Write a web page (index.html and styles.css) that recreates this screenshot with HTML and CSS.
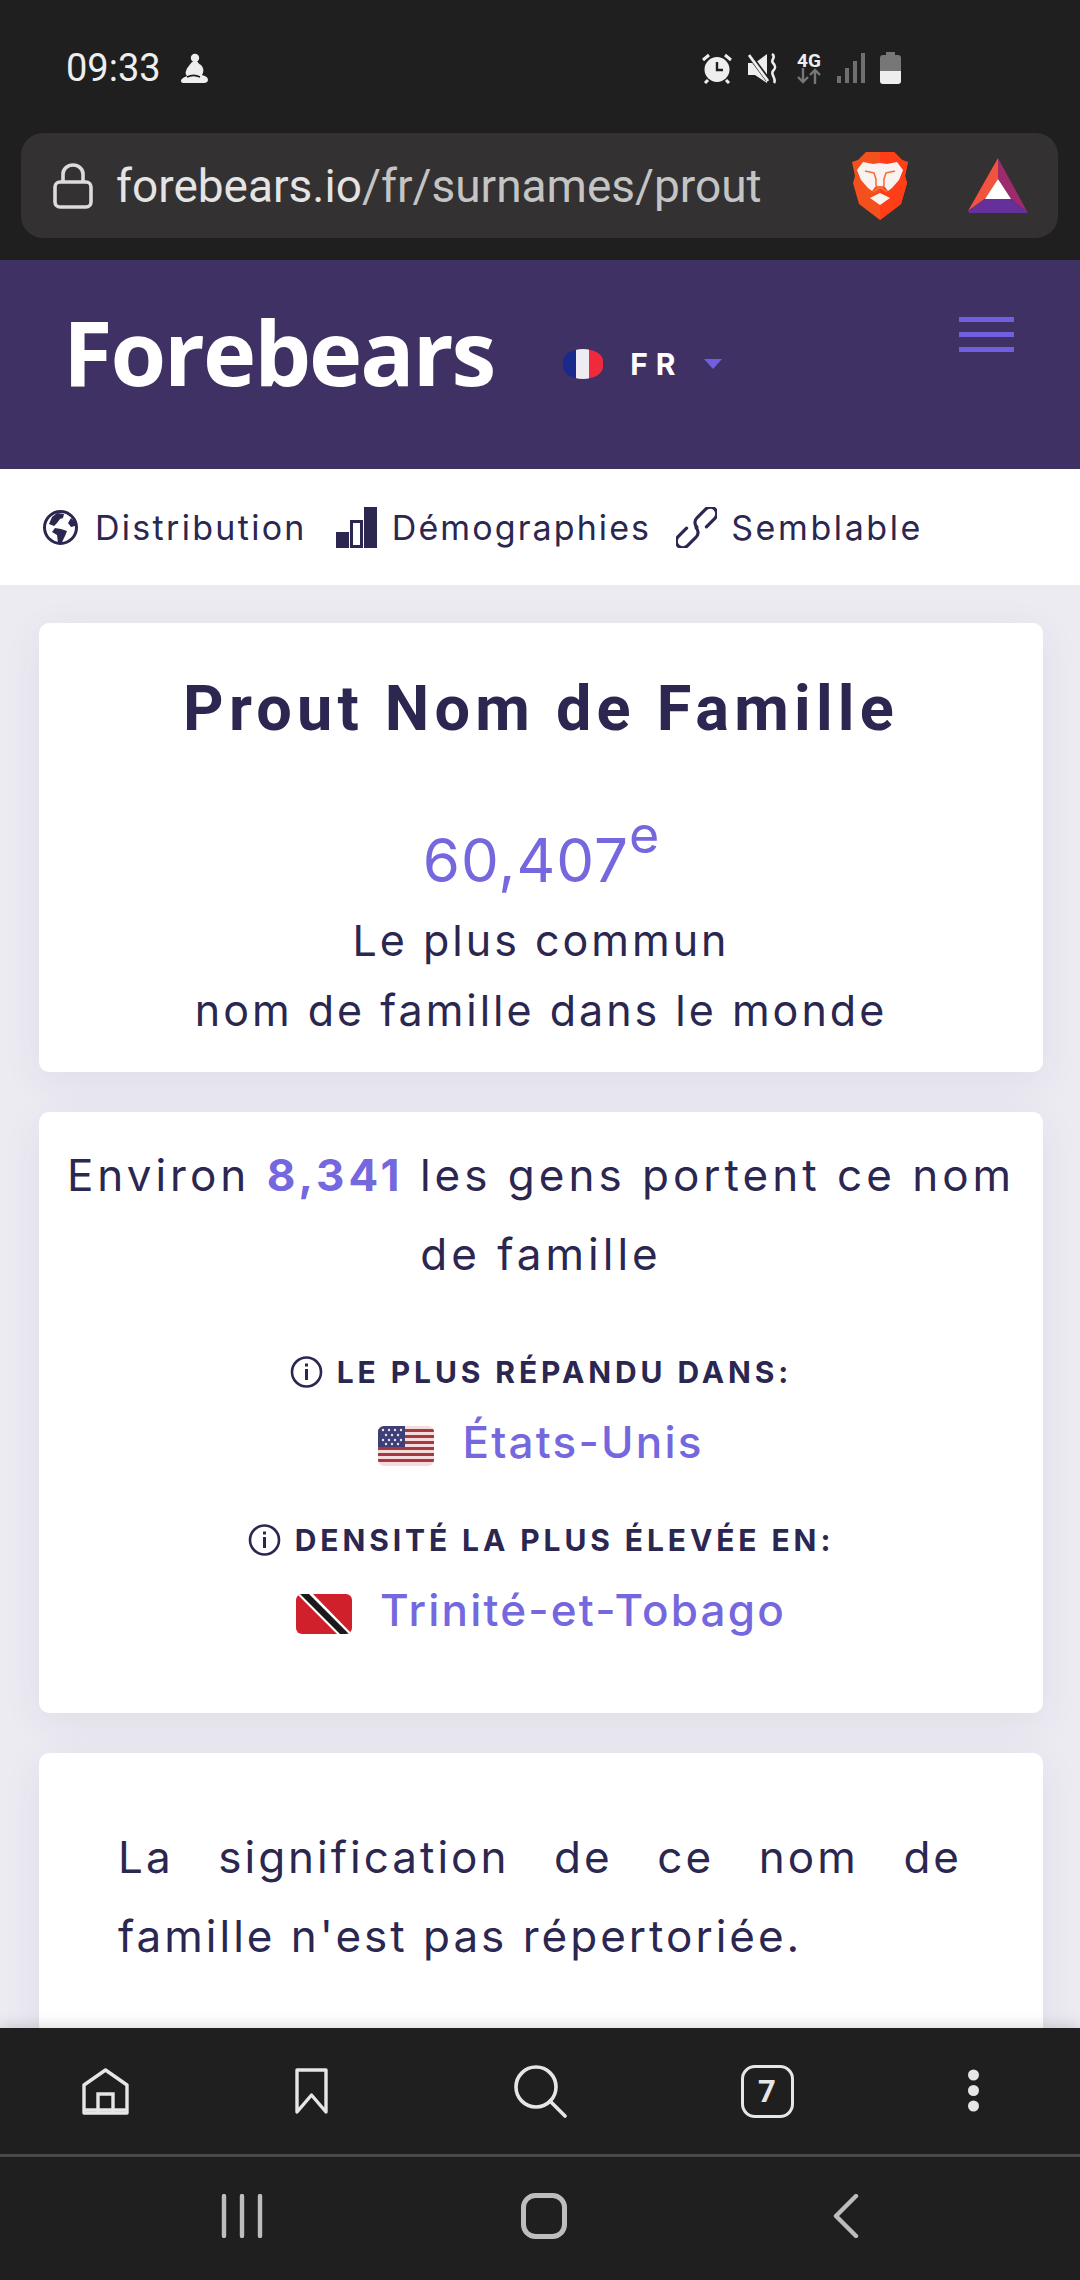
FILE: index.html
```html
<!DOCTYPE html>
<html lang="fr">
<head>
  <meta charset="UTF-8" />
  <title>Prout Nom de Famille – Forebears</title>
  <link rel="stylesheet" href="styles.css">
</head>
<body>
  <div class="browser_top">
    <div class="status">
      <span class="time">09:33</span>
      <svg class="baby" width="28" height="30" viewBox="0 0 28 30"><circle cx="15" cy="5" r="4.200" fill="#eee"/><path d="M12 9c-2 3-5 5-6 9-1 2 0 4 1 5-3 1-6 3-6 5s2 2 4 2h19c2 0 4-1 4-3 0-3-3-4-6-5 2-3 2-7-1-10-2-1-3-2-3-3z" fill="#eee"/><path d="M7 24c4-2 9-2 13 0" stroke="#1f1f1f" stroke-width="1.600" fill="none"/></svg>
      <div class="status_icons">
        <svg width="30" height="31" viewBox="0 0 30 31"><circle cx="15" cy="16.500" r="12.500" fill="#eee"/><path d="M15 9v8h6" stroke="#1f1f1f" stroke-width="2.400" fill="none"/><path d="M1 7l6-5M29 7l-6-5M6 27l-3 3M24 27l3 3" stroke="#eee" stroke-width="3" fill="none"/></svg>
        <svg class="mute" width="30" height="31" viewBox="0 0 30 31"><path d="M0 10h7l12-9v29L7 22H0z" fill="#eee"/><path d="M0 0l20 27" stroke="#1f1f1f" stroke-width="5"/><path d="M1 2l19 26" stroke="#eee" stroke-width="2.800"/><path d="M24 1c5 3-2 6 1 9s3 5 0 8 4 8 1 12" stroke="#eee" stroke-width="2.600" fill="none"/></svg>
        <div class="net">
          <span class="net_label">4G</span>
          <svg width="24" height="16" viewBox="0 0 24 16"><path d="M6 0v14M1 9l5 5 5-5" stroke="#777" stroke-width="2.400" fill="none"/><path d="M18 16V2M13 7l5-5 5 5" stroke="#777" stroke-width="2.400" fill="none"/></svg>
        </div>
        <svg width="29" height="30" viewBox="0 0 29 30"><g fill="#6f6f6f"><rect x="0" y="23" width="4" height="7"/><rect x="8" y="15" width="4" height="15"/><rect x="16" y="8" width="4" height="22"/><rect x="24" y="0" width="4" height="30"/></g></svg>
        <svg class="battery" width="21" height="32" viewBox="0 0 21 32"><path d="M6 0h9v3h3a3 3 0 0 1 3 3v13H0V6a3 3 0 0 1 3-3h3z" fill="#777"/><path d="M0 19h21v10a3 3 0 0 1-3 3H3a3 3 0 0 1-3-3z" fill="#eee"/></svg>
      </div>
    </div>
    <div class="urlbar">
      <svg class="lock" width="40" height="46" viewBox="0 0 40 46"><rect x="2" y="19" width="36" height="25" rx="5" fill="none" stroke="#dcdcdc" stroke-width="3.600"/><path d="M10 19V11a10 9 0 0 1 20 0v8" fill="none" stroke="#dcdcdc" stroke-width="3.600"/></svg>
      <span class="url"><span class="url_host">forebears.io</span>/fr/surnames/prout</span>
      <div class="url_actions">
        <svg width="56" height="68" viewBox="0 0 56 68">
          <path d="M14 0h28l8 8 6 2-3 14 2 7-6 21-21 16-21-16-6-21 2-7-3-14 6-2z" fill="#f4501e"/>
          <path d="M28 0h14l8 8 6 2-3 14 2 7-6 21-21 16z" fill="#ff3d17"/>
          <path d="M11 10l10 2 7-1 7 1 10-2 6 8-4 10-7 8-4 3-3-4-5-1-5 1-3 4-4-3-7-8-4-10z" fill="#f8f3f0"/>
          <path d="M18 46l10-5 10 5-10 7z" fill="#f8f3f0"/>
          <path d="M13 19l9 2 2 6v7l4 2 4-2v-7l2-6 9-2M21 40l7-5 7 5" fill="none" stroke="#f4703e" stroke-width="1.600"/>
        </svg>
        <svg width="60" height="55" viewBox="0 0 60 55">
          <path d="M30 0L0 53l18-13 12-19z" fill="#f2533c"/>
          <path d="M30 0l30 55-18-15-12-19z" fill="#9e2a6e"/>
          <path d="M0 53l1 2h59L42 40H18z" fill="#66309a"/>
          <path d="M30 21l13 20H17z" fill="#fff"/>
        </svg>
      </div>
    </div>
  </div>

  <div class="page">
    <header class="site_header">
      <span class="logo">Forebears</span>
      <div class="lang">
        <span class="lang_flag"></span>
        <span class="lang_code">FR</span>
        <span class="lang_caret"></span>
      </div>
      <div class="burger"><span></span><span></span><span></span></div>
    </header>

    <nav class="tabs">
      <a class="tab tab_first">
        <svg width="35" height="35" viewBox="0 0 35 35"><circle cx="17.500" cy="17.500" r="16" fill="#fff" stroke="#2b2750" stroke-width="3"/><path d="M14 3l-5 4-3 7 5 2 3-3 3-4 3-1 1-4zM12 18l-3 4 5 3 1 8 4-1 3-6 2-5-6-2zM28 8l-3 5 3 4 4-1 1-3z" fill="#2b2750"/></svg>
        Distribution
      </a>
      <a class="tab tab_second">
        <svg width="41" height="41" viewBox="0 0 41 41"><rect x="0" y="25" width="13" height="16" fill="#2b2750"/><rect x="15.500" y="14.500" width="10" height="25" fill="none" stroke="#2b2750" stroke-width="3"/><rect x="28" y="0" width="13" height="41" fill="#2b2750"/></svg>
        Démographies
      </a>
      <a class="tab tab_third">
        <svg width="41" height="41" viewBox="0 0 41 41"><g transform="rotate(45 20.500 20.500)" fill="none" stroke="#2b2750" stroke-width="3.200" stroke-linecap="round"><path d="M27 13V1a6.500 6.500 0 0 0-13 0v12a6.500 6.500 0 0 0 6.500 7"/><path d="M14 28v12a6.500 6.500 0 0 0 13 0V28a6.500 6.500 0 0 0-6.500-7"/></g></svg>
        Semblable
      </a>
    </nav>

    <main class="cards">
      <section class="card card_rank">
        <h1 class="title">Prout Nom de Famille</h1>
        <div class="rank">60,407<sup>e</sup></div>
        <p class="rank_text">Le plus commun<br>nom de famille dans le monde</p>
      </section>

      <section class="card card_count">
        <p class="count">Environ <b>8,341</b> les gens portent ce nom de famille</p>
        <div class="stat_label stat_first">
          <svg width="33" height="32" viewBox="0 0 33 32"><circle cx="16.500" cy="16" r="14.500" fill="none" stroke="#2b2750" stroke-width="2.600"/><rect x="15" y="13" width="3" height="11" fill="#2b2750"/><rect x="15" y="7.500" width="3" height="3" fill="#2b2750"/></svg>
          Le plus répandu dans:
        </div>
        <a class="stat_value">
          <svg width="56" height="40" viewBox="0 0 56 40">
            <defs><clipPath id="us_clip"><rect width="56" height="40" rx="6"/></clipPath></defs>
            <g clip-path="url(#us_clip)">
              <rect width="56" height="40" fill="#f6dbdc"/>
              <g fill="#a33a40"><rect y="3" width="56" height="3"/><rect y="9" width="56" height="3"/><rect y="15" width="56" height="3"/><rect y="21" width="56" height="3"/><rect y="27" width="56" height="3"/><rect y="33" width="56" height="3"/></g>
              <rect width="27" height="21" fill="#3f3f77"/>
              <g fill="#e8e8f2"><circle cx="5" cy="4" r="1.200"/><circle cx="11" cy="4" r="1.200"/><circle cx="17" cy="4" r="1.200"/><circle cx="23" cy="4" r="1.200"/><circle cx="8" cy="9" r="1.200"/><circle cx="14" cy="9" r="1.200"/><circle cx="20" cy="9" r="1.200"/><circle cx="5" cy="14" r="1.200"/><circle cx="11" cy="14" r="1.200"/><circle cx="17" cy="14" r="1.200"/><circle cx="23" cy="14" r="1.200"/><circle cx="8" cy="18" r="1.200"/><circle cx="14" cy="18" r="1.200"/><circle cx="20" cy="18" r="1.200"/></g>
            </g>
          </svg>
          États-Unis
        </a>
        <div class="stat_label stat_second">
          <svg width="33" height="32" viewBox="0 0 33 32"><circle cx="16.500" cy="16" r="14.500" fill="none" stroke="#2b2750" stroke-width="2.600"/><rect x="15" y="13" width="3" height="11" fill="#2b2750"/><rect x="15" y="7.500" width="3" height="3" fill="#2b2750"/></svg>
          Densité la plus élevée en:
        </div>
        <a class="stat_value">
          <svg width="56" height="40" viewBox="0 0 56 40">
            <defs><clipPath id="tt_clip"><rect width="56" height="40" rx="6"/></clipPath></defs>
            <g clip-path="url(#tt_clip)">
              <rect width="56" height="40" fill="#d0202c"/>
              <path d="M1 0h16l39 40H41z" fill="#fff"/>
              <path d="M4 0h9l40 40h-9z" fill="#1a1a1a"/>
            </g>
          </svg>
          Trinité-et-Tobago
        </a>
      </section>

      <section class="card card_meaning">
        <p class="meaning">La signification de ce nom de famille n'est pas répertoriée.</p>
      </section>
    </main>
  </div>

  <div class="browser_bottom">
    <div class="toolbar">
      <svg width="47" height="47" viewBox="0 0 47 47"><path d="M2 45V17L23.500 2 45 17v28z" fill="none" stroke="#e6e6e6" stroke-width="3.400" stroke-linejoin="round"/><path d="M16 45V26h15v19" fill="none" stroke="#e6e6e6" stroke-width="3.400"/><path d="M2 42h43" stroke="#e6e6e6" stroke-width="3.400"/></svg>
      <svg width="33" height="46" viewBox="0 0 33 46"><path d="M2 2h29v42L16.500 27 2 44z" fill="none" stroke="#e6e6e6" stroke-width="3.400" stroke-linejoin="round"/></svg>
      <svg width="53" height="53" viewBox="0 0 53 53"><circle cx="22" cy="22" r="20" fill="none" stroke="#e6e6e6" stroke-width="3.600"/><path d="M36 36l15 15" stroke="#e6e6e6" stroke-width="3.600" stroke-linecap="round"/></svg>
      <div class="tab_count">7</div>
      <svg width="11" height="44" viewBox="0 0 11 44"><circle cx="5.500" cy="6" r="5.500" fill="#e6e6e6"/><circle cx="5.500" cy="21.500" r="5.500" fill="#e6e6e6"/><circle cx="5.500" cy="37" r="5.500" fill="#e6e6e6"/></svg>
    </div>
    <div class="nav_keys">
      <svg width="42" height="44" viewBox="0 0 42 44"><path d="M3 2v40M21 2v40M39 2v40" stroke="#bdbdbd" stroke-width="4.400" stroke-linecap="round"/></svg>
      <svg width="46" height="46" viewBox="0 0 46 46"><rect x="2.500" y="2.500" width="41" height="41" rx="12" fill="none" stroke="#bdbdbd" stroke-width="5"/></svg>
      <svg width="26" height="44" viewBox="0 0 26 44"><path d="M23 2L3 22l20 20" fill="none" stroke="#bdbdbd" stroke-width="4.400" stroke-linecap="round" stroke-linejoin="round"/></svg>
    </div>
  </div>
</body>
</html>
```

FILE: styles.css
```css
body {
  margin: 0;
  width: 1080px;
  height: 2280px;
  overflow: hidden;
  display: flex;
  flex-direction: column;
  font-family: Inter, sans-serif;
  color: #2b2750;
  background: #ecebf2;
}

svg {
  display: block;
  flex: none;
}

/* barre du navigateur */
.browser_top {
  height: 260px;
  flex: none;
  background: #1f1f1f;
  box-sizing: border-box;
}

.status {
  height: 133px;
  box-sizing: border-box;
  padding: 3px 179px 0 66px;
  display: flex;
  align-items: center;
}

.time {
  font-family: Roboto, sans-serif;
  font-size: 38px;
  color: #eeeeee;
}

.baby {
  margin-left: 19px;
}

.status_icons {
  margin-left: auto;
  display: flex;
  align-items: center;
  gap: 16px;
}

.mute {
  margin-right: 3px;
}

.net {
  width: 24px;
  display: flex;
  flex-direction: column;
  align-items: center;
}

.net_label {
  font-family: Roboto, sans-serif;
  font-size: 19px;
  font-weight: 700;
  line-height: 15px;
  color: #eeeeee;
}

.battery {
  margin-left: -2px;
}

.urlbar {
  height: 105px;
  margin: 0 22px 0 21px;
  padding: 0 30px 0 32px;
  border-radius: 22px;
  background: #333132;
  display: flex;
  align-items: center;
}

.url {
  margin-left: 23px;
  font-family: Roboto, sans-serif;
  font-size: 46px;
  color: #c4c4c4;
}

.url_host {
  color: #e4e4e4;
}

.url_actions {
  margin-left: auto;
  display: flex;
  align-items: center;
  gap: 60px;
}

/* en-tete du site */
.page {
  flex: 1;
  min-height: 0;
  overflow: hidden;
}

.site_header {
  height: 209px;
  box-sizing: border-box;
  padding: 41px 66px 0 63px;
  display: flex;
  align-items: flex-start;
  background: #3f3163;
  color: #fff;
}

.logo {
  font-family: "Open Sans", sans-serif;
  font-size: 90px;
  font-weight: 700;
  line-height: 100px;
  letter-spacing: -2px;
}

.lang {
  margin: 45px 0 0 69px;
  display: flex;
  align-items: center;
}

.lang_flag {
  width: 40px;
  height: 30px;
  border-radius: 50% / 40%;
  background: linear-gradient(90deg, #1a2a8c 33%, #ececf2 33% 66%, #ee2a3c 66%);
}

.lang_code {
  margin-left: 27px;
  font-size: 30px;
  font-weight: 700;
  letter-spacing: 8px;
}

.lang_caret {
  margin-left: 20px;
  border-left: 9px solid transparent;
  border-right: 9px solid transparent;
  border-top: 10px solid #7060e0;
}

.burger {
  margin: 16px 0 0 auto;
  width: 55px;
  display: flex;
  flex-direction: column;
  gap: 10px;
}

.burger span {
  height: 5px;
  background: #7060e0;
}

.tabs {
  height: 116px;
  padding-left: 43px;
  box-sizing: border-box;
  background: #fff;
  display: flex;
  align-items: center;
  gap: 26px;
  font-size: 34px;
  letter-spacing: 2.100px;
}

.tab {
  display: flex;
  align-items: center;
  gap: 17px;
}

.tab_first {
  margin-right: 3px;
  letter-spacing: 2.300px;
}

.tab_second {
  gap: 15px;
}

.tab_third {
  margin-left: -1px;
  gap: 14px;
  letter-spacing: 2.600px;
}

/* cartes */
.cards {
  padding: 38px 37px 0 39px;
  display: flex;
  flex-direction: column;
  gap: 40px;
}

.card {
  background: #fff;
  border-radius: 10px;
  box-shadow: 0 10px 40px rgba(60, 50, 120, 0.07);
  text-align: center;
  box-sizing: border-box;
}

.card_rank {
  height: 449px;
  padding-top: 51px;
}

.title {
  margin: 0;
  font-family: Roboto, sans-serif;
  font-size: 63px;
  font-weight: 700;
  line-height: 70px;
  letter-spacing: 5.200px;
}

.rank {
  margin-top: 81px;
  font-size: 60px;
  line-height: 70px;
  letter-spacing: 1px;
  color: #7567dd;
}

.rank sup {
  font-size: 52px;
  line-height: 0;
  letter-spacing: 0;
  vertical-align: 29px;
}

.rank_text {
  margin: 10px 0 0;
  font-size: 43px;
  line-height: 70px;
  letter-spacing: 3px;
}

.card_count {
  height: 601px;
  padding-top: 24px;
}

.count {
  margin: 0;
  padding: 0 20px;
  font-size: 44px;
  line-height: 79px;
  letter-spacing: 4px;
}

.count b {
  color: #7567dd;
}

.stat_label {
  display: flex;
  align-items: center;
  justify-content: center;
  gap: 14px;
  font-size: 30px;
  font-weight: 700;
  letter-spacing: 3.900px;
  text-transform: uppercase;
}

.stat_first {
  margin-top: 60px;
}

.stat_second {
  margin-top: 54px;
}

.stat_value {
  height: 53px;
  margin-top: 25px;
  display: flex;
  align-items: center;
  justify-content: center;
  gap: 28px;
  font-size: 44px;
  font-weight: 500;
  letter-spacing: 2.200px;
  color: #7567dd;
}

.stat_value svg {
  margin-top: 9px;
}

.card_meaning {
  height: 400px;
  padding: 65px 81px 0 79px;
}

.meaning {
  margin: 0;
  font-size: 44px;
  line-height: 79px;
  letter-spacing: 3px;
  text-align: justify;
}

/* barres du bas */
.browser_bottom {
  height: 252px;
  flex: none;
  background: #1f1f1f;
  box-shadow: 0 -4px 12px rgba(0, 0, 0, 0.12);
  position: relative;
}

.toolbar {
  height: 129px;
  display: grid;
  grid-template-columns: 210px 202px 256px 198px 214px;
  align-items: center;
  justify-items: center;
  border-bottom: 3px solid #4a4a4a;
  box-sizing: border-box;
}

.tab_count {
  width: 53px;
  height: 53px;
  box-sizing: border-box;
  border: 3.500px solid #e6e6e6;
  border-radius: 14px;
  display: flex;
  align-items: center;
  justify-content: center;
  font-family: Roboto, sans-serif;
  font-size: 31px;
  font-weight: 700;
  color: #e6e6e6;
}

.nav_keys {
  height: 123px;
  box-sizing: border-box;
  padding: 0 0 6px 91px;
  display: grid;
  grid-template-columns: repeat(3, 302px);
  align-items: center;
  justify-items: center;
}
```
